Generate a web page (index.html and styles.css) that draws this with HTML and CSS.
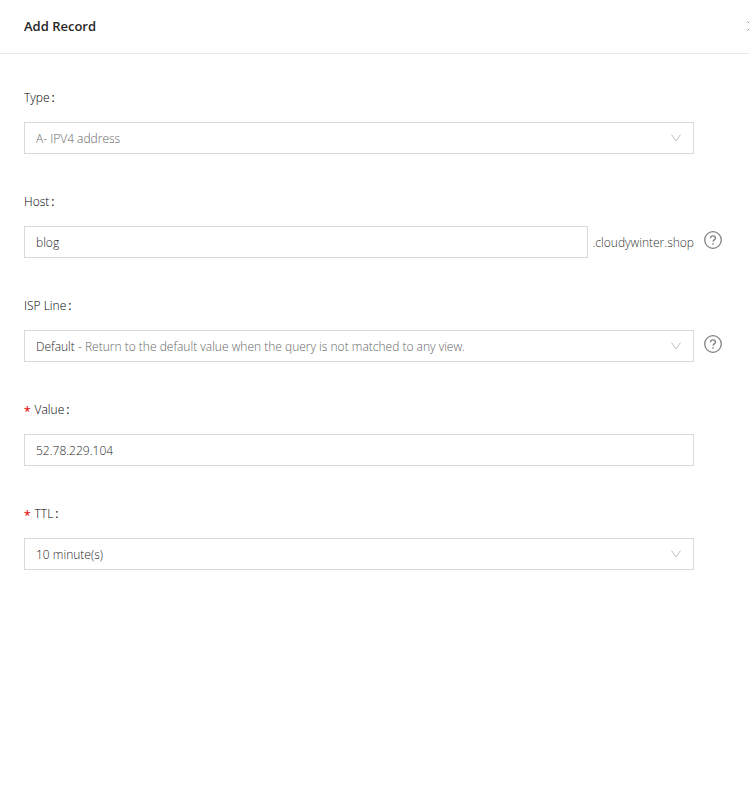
FILE: index.html
```html
<!DOCTYPE html>
<html lang="en">
<head>
<meta charset="utf-8">
<title>Add Record</title>
<meta name="viewport" content="width=device-width, initial-scale=1">
<link rel="stylesheet" href="styles.css">
</head>
<body>
<header class="header">
  <h1 class="title">Add Record</h1>
  <button class="close" type="button" aria-label="Close">
    <svg viewBox="0 0 10 10" width="10" height="10"><path d="M.5.5l9 9M9.5.5l-9 9"/></svg>
  </button>
</header>
<form class="form">
  <div class="field">
    <label class="label" for="type">Type<span class="colon">:</span></label>
    <div class="row">
      <div class="picker">
        <select class="control muted" id="type"><option>A- IPV4 address</option></select>
        <svg class="chevron" viewBox="0 0 12 10" width="12" height="10"><path d="M1.500 1.500L6 8l4.500-6.500"/></svg>
      </div>
    </div>
  </div>
  <div class="field">
    <label class="label" for="host">Host<span class="colon">:</span></label>
    <div class="row">
      <input class="control" id="host" type="text" value="blog">
      <span class="suffix">.cloudywinter.shop</span>
      <button class="help" type="button" aria-label="Help">
        <svg viewBox="0 0 18 18" width="18" height="18"><circle cx="9" cy="9" r="8.300"/><path d="M6.500 7.200C6.500 5.700 7.500 4.900 9 4.900s2.500.8 2.500 2.200c0 1.800-2.500 1.800-2.500 3.700"/><circle class="dot" cx="9" cy="12.900" r=".8"/></svg>
      </button>
    </div>
  </div>
  <div class="field">
    <label class="label" for="line">ISP Line<span class="colon">:</span></label>
    <div class="row">
      <div class="picker">
        <select class="control" id="line" aria-describedby="line-hint"><option>Default</option></select>
        <span class="hint" id="line-hint">- Return to the default value when the query is not matched to any view.</span>
        <svg class="chevron" viewBox="0 0 12 10" width="12" height="10"><path d="M1.500 1.500L6 8l4.500-6.500"/></svg>
      </div>
      <button class="help" type="button" aria-label="Help">
        <svg viewBox="0 0 18 18" width="18" height="18"><circle cx="9" cy="9" r="8.300"/><path d="M6.500 7.200C6.500 5.700 7.500 4.900 9 4.900s2.500.8 2.500 2.200c0 1.800-2.500 1.800-2.500 3.700"/><circle class="dot" cx="9" cy="12.900" r=".8"/></svg>
      </button>
    </div>
  </div>
  <div class="field">
    <label class="label" for="value"><span class="required">*</span>Value<span class="colon">:</span></label>
    <div class="row">
      <input class="control" id="value" type="text" value="52.78.229.104" required>
    </div>
  </div>
  <div class="field">
    <label class="label" for="ttl"><span class="required">*</span>TTL<span class="colon">:</span></label>
    <div class="row">
      <div class="picker">
        <select class="control" id="ttl" required><option>10 minute(s)</option></select>
        <svg class="chevron" viewBox="0 0 12 10" width="12" height="10"><path d="M1.500 1.500L6 8l4.500-6.500"/></svg>
      </div>
    </div>
  </div>
</form>
</body>
</html>
```
FILE: styles.css
```css
* { box-sizing: border-box; }
body {
  margin: 0;
  background: #fff;
  color: #000;
  font: 300 12px/20px "Open Sans", "Noto Sans", sans-serif;
}
button { padding: 0; border: 0; background: none; }
svg { display: block; fill: none; stroke: #808080; }
.header {
  display: flex;
  align-items: center;
  justify-content: space-between;
  height: 54px;
  padding: 0 0 1px 24px;
  border-bottom: 1px solid #e8e8e8;
  overflow: hidden;
}
.title { margin: 0; font-size: 13px; font-weight: 600; color: #262626; }
.close { margin-right: -8px; }
.form { padding: 28px 55px 28px 24px; }
.field { margin-bottom: 32px; }
.label { display: flex; align-items: center; height: 32px; margin-bottom: 8px; }
.colon { margin-left: 2px; font-weight: 400; }
.required { margin: 4px 4px 0 0; color: #e02020; font-weight: 600; }
.row { display: flex; align-items: center; }
.picker { position: relative; flex: 1; min-width: 0; }
.control {
  display: block;
  flex: 1;
  width: 100%;
  min-width: 0;
  height: 32px;
  margin: 0;
  padding: 1px 11px 0;
  border: 1px solid #d9d9d9;
  border-radius: 0;
  background: #fff;
  color: #262626;
  font: inherit;
  appearance: none;
}
.muted { color: #666; }
.chevron { position: absolute; top: 11px; right: 12px; stroke: #bfbfbf; pointer-events: none; }
.hint {
  position: absolute;
  top: 7px;
  left: 54px;
  color: #666;
  white-space: nowrap;
  pointer-events: none;
}
.suffix { margin-left: 4px; padding-top: 2px; color: #333; }
.help { margin: 0 -28px 4px 10px; }
.help svg { stroke-width: 1.3; }
.help .dot { fill: #808080; stroke: none; }
```
